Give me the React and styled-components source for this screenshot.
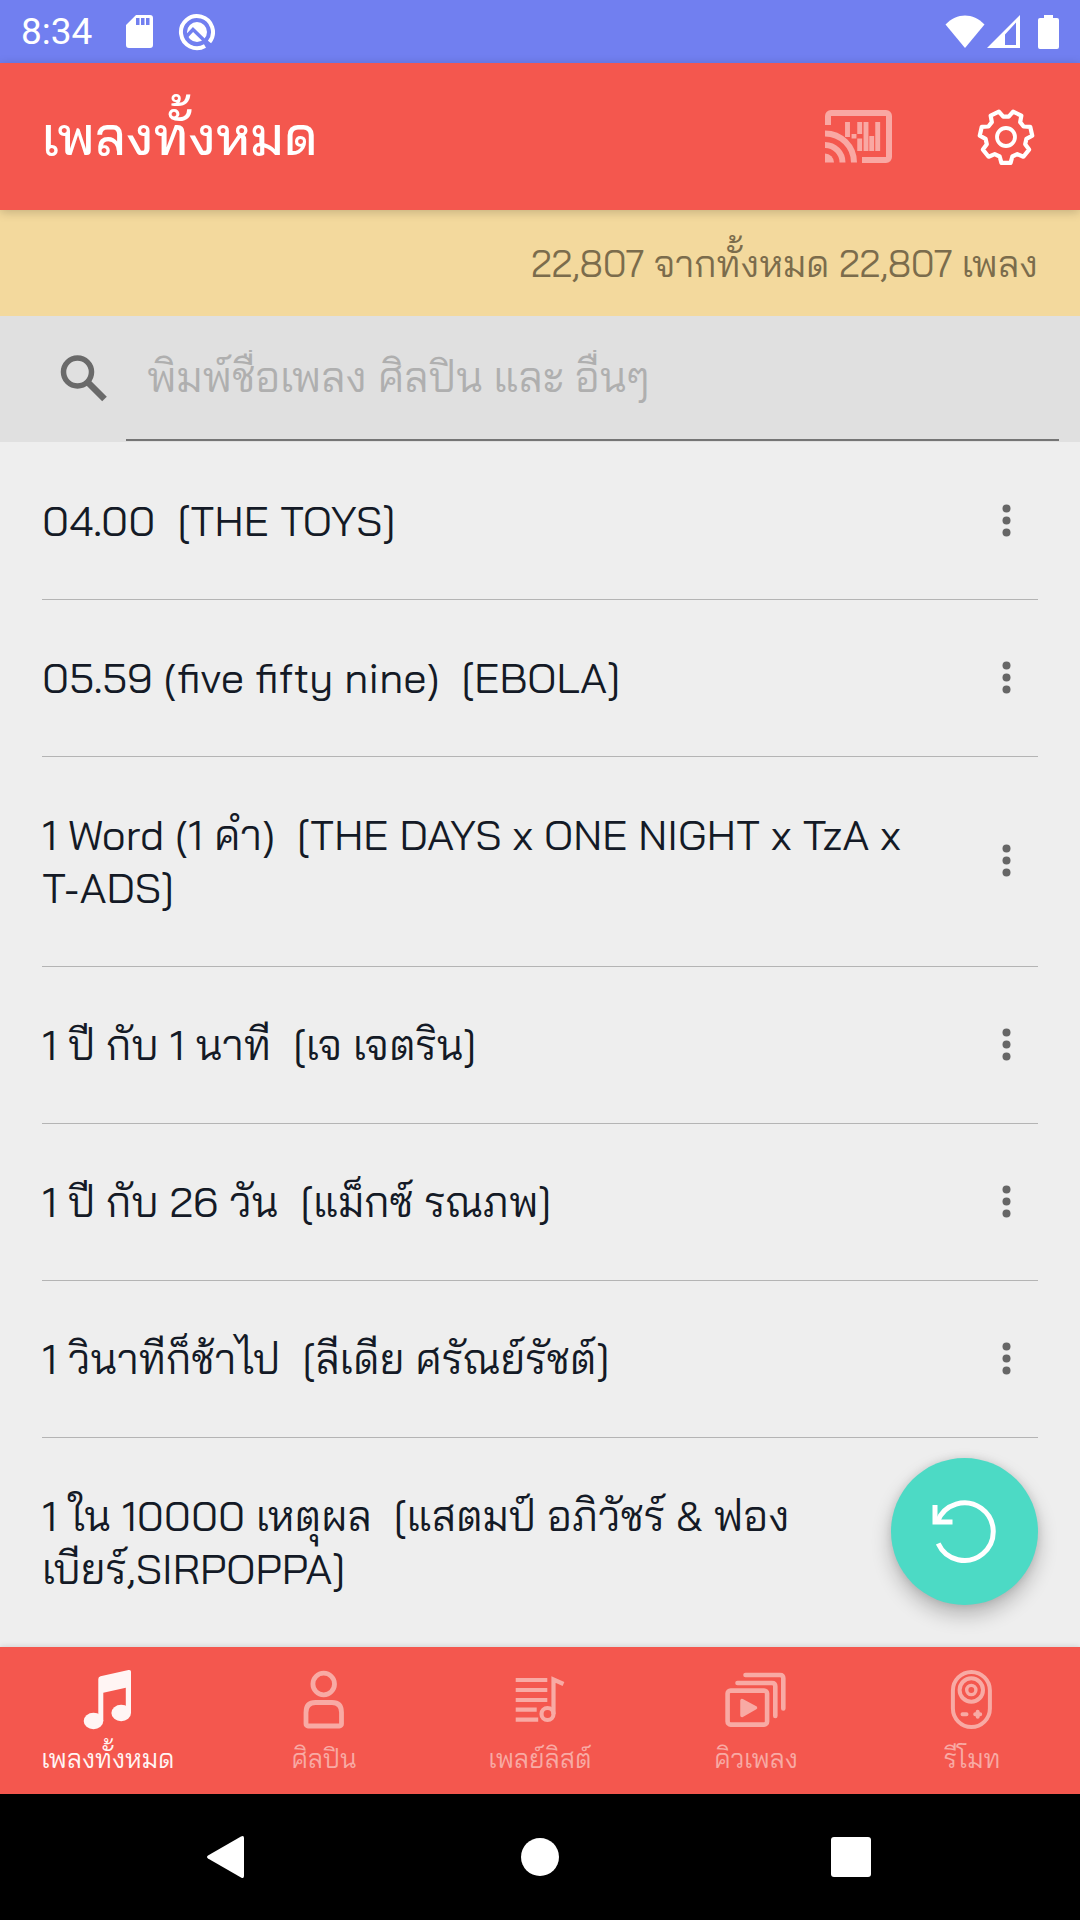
import React, { useState } from 'react';
import styled, { createGlobalStyle } from 'styled-components';

const GlobalStyle = createGlobalStyle`
  * {
    box-sizing: border-box;
  }

  body {
    margin: 0;
    background: #eeeeee;
    font-family: 'Bai Jamjuree', 'Noto Sans Thai', 'Noto Sans', sans-serif;
  }

  button, input {
    font-family: inherit;
  }
`;

const Screen = styled.div`
  display: flex;
  flex-direction: column;
  height: 100vh;
`;

const StatusBar = styled.div`
  flex: none;
  display: flex;
  align-items: center;
  justify-content: space-between;
  height: 63px;
  padding: 0 21px;
  background: #717ff0;
  color: white;
`;

const StatusGroup = styled.div`
  display: flex;
  align-items: center;
  gap: ${({ $gap }) => $gap};
`;

const Clock = styled.time`
  font-family: Roboto, sans-serif;
  font-size: 37px;
  line-height: 44px;
  margin-right: 10px;
`;

const Header = styled.header`
  flex: none;
  position: relative;
  display: flex;
  align-items: center;
  height: 147px;
  padding: 0 32px 0 42px;
  background: #f4574e;
  color: white;
  box-shadow: 0 2px 10px rgba(0, 0, 0, 0.2);
`;

const Title = styled.h1`
  flex: 1;
  margin: 0;
  padding-bottom: 4px;
  font-size: 53px;
  line-height: 66px;
  font-weight: 500;
`;

const IconButton = styled.button`
  display: flex;
  align-items: center;
  justify-content: center;
  flex: none;
  width: ${({ $width }) => $width || '64px'};
  height: 84px;
  padding: 0;
  border: none;
  background: none;
  color: inherit;
  cursor: pointer;
`;

const HeaderActions = styled.div`
  display: flex;
  gap: 63px;
`;

const CountBar = styled.p`
  flex: none;
  margin: 0;
  padding: 30px 42px;
  background: #f3d99d;
  color: #7b6c4c;
  font-size: 37px;
  line-height: 46px;
  text-align: right;
`;

const SearchBar = styled.form`
  flex: none;
  display: flex;
  height: 126px;
  padding: 0 21px 1px 42px;
  background: #e0e0e0;
`;

const SearchLabel = styled.label`
  display: flex;
  align-items: center;
  width: 84px;
  padding-bottom: 2px;
  color: #6a6a6a;
`;

const SearchInput = styled.input`
  flex: 1;
  min-width: 0;
  padding: 0 21px 2px;
  border: none;
  border-bottom: 2px solid #757575;
  background: none;
  color: #141a26;
  font-size: 42px;
  outline: none;

  &::placeholder {
    color: #afafaf;
    opacity: 1;
  }
`;

const SongArea = styled.main`
  position: relative;
  flex: 1;
  min-height: 0;
`;

const SongList = styled.ul`
  height: 100%;
  margin: 0;
  padding: 0 42px;
  overflow-y: auto;
  list-style: none;
  scrollbar-width: none;
`;

const SongRow = styled.li`
  display: flex;
  align-items: center;
  gap: 42px;
  padding: 52px 0;
  color: #141a26;

  & + & {
    padding-top: 51px;
    border-top: 1px solid #b4b4b4;
  }
`;

const SongTitle = styled.span`
  flex: 1;
  font-size: 42px;
  line-height: 53px;
  white-space: pre-wrap;
`;

const MoreButton = styled(IconButton)`
  height: 53px;
  color: #666666;
`;

const Fab = styled.button`
  position: absolute;
  right: 42px;
  bottom: 42px;
  display: flex;
  align-items: center;
  justify-content: center;
  width: 147px;
  height: 147px;
  padding: 0;
  border: none;
  border-radius: 50%;
  background: #4cdac5;
  color: white;
  box-shadow: 0 10px 20px rgba(0, 0, 0, 0.24), 0 0 8px rgba(0, 0, 0, 0.1);
  cursor: pointer;
`;

const TabBar = styled.nav`
  flex: none;
  position: relative;
  display: flex;
  height: 147px;
  background: #f4574e;
  box-shadow: 0 0 6px rgba(0, 0, 0, 0.15);
`;

const Tab = styled.button`
  flex: 1;
  display: flex;
  flex-direction: column;
  align-items: center;
  gap: 12px;
  padding: 20px 0 0;
  border: none;
  background: none;
  color: ${({ $active }) => ($active ? '#fff5f4' : '#f8aaa4')};
  font-size: 26px;
  line-height: 32px;
  cursor: pointer;
`;

const SystemBar = styled.div`
  flex: none;
  display: flex;
  align-items: center;
  justify-content: center;
  gap: 228px;
  height: 126px;
  background: black;
  color: white;
`;

const songs = [
  '04.00  [THE TOYS]',
  '05.59 (five fifty nine)  [EBOLA]',
  '1 Word (1 คำ)  [THE DAYS x ONE NIGHT x TzA x T-ADS]',
  '1 ปี กับ 1 นาที  [เจ เจตริน]',
  '1 ปี กับ 26 วัน  [แม็กซ์ รณภพ]',
  '1 วินาทีก็ช้าไป  [ลีเดีย ศรัณย์รัชต์]',
  '1 ใน 10000 เหตุผล  [แสตมป์ อภิวัชร์ & ฟองเบียร์,SIRPOPPA]',
];

// one tooth = two points on the inner circle and two on the outer one
const gearPoints = Array.from({ length: 7 }, (_, i) =>
  [[20.5, -18], [26.3, -10], [26.3, 10], [20.5, 18]].map(([r, offset]) => {
    const angle = ((i * 360) / 7 + 90 + offset) * (Math.PI / 180);
    return `${(30 + r * Math.cos(angle)).toFixed(2)},${(30 + r * Math.sin(angle)).toFixed(2)}`;
  }).join(' ')
).join(' ');

const SdCardIcon = () => (
  <svg width="28" height="34" viewBox="0 0 28 34" fill="currentColor">
    <path
      fillRule="evenodd"
      d="M10 0h14a3 3 0 0 1 3 3v27a3 3 0 0 1-3 3H3a3 3 0 0 1-3-3V10zM10 3v7h3.5V3zM15 3v7h3.5V3zM20 3v7h3.5V3z"
    />
  </svg>
);

const SyncBadgeIcon = () => (
  <svg width="38" height="38" viewBox="0 0 38 38" fill="none" stroke="currentColor">
    <path d="M31.500 29A16 16 0 1 0 27 32.900" strokeWidth="4" />
    <circle cx="19" cy="19" r="10" fill="currentColor" stroke="none" />
    <path d="M8 24l7-7.500L33 34" stroke="#717ff0" strokeWidth="3.400" />
  </svg>
);

const WifiIcon = () => (
  <svg width="40" height="34" viewBox="0 0 40 34" fill="currentColor">
    <path d="M20 33L.5 9.500C12 -2.500 28 -2.500 39.500 9.500z" />
  </svg>
);

const SignalIcon = () => (
  <svg width="33" height="34" viewBox="0 0 33 34" fill="currentColor">
    <path fillRule="evenodd" d="M0 33L33 0v33zM18 19.500V30h11V7.500z" />
  </svg>
);

const BatteryIcon = () => (
  <svg width="21" height="34" viewBox="0 0 21 34" fill="currentColor">
    <path d="M6 0h9v3h4a2 2 0 0 1 2 2v27a2 2 0 0 1-2 2H2a2 2 0 0 1-2-2V5a2 2 0 0 1 2-2h4z" />
  </svg>
);

const CastIcon = () => (
  <svg width="68" height="54" viewBox="0 0 68 54" fill="none" stroke="#f9a8a3" strokeWidth="6">
    <path d="M3 15V6a3 3 0 0 1 3-3h55a3 3 0 0 1 3 3v41a3 3 0 0 1-3 3H37" />
    <path d="M0 23.500a29 29 0 0 1 29 29M0 35a17.500 17.500 0 0 1 17.500 17.500" />
    <path d="M0 43.500a9 9 0 0 1 9 9H0z" fill="#f9a8a3" stroke="none" />
    <path
      d="M22.500 12v15M29 24v4.500M34.700 12v12M34.700 28.500V41M41 12v29M46.700 26v15M52.700 12v29"
      strokeWidth="4.900"
    />
  </svg>
);

const GearIcon = () => (
  <svg width="60" height="60" viewBox="0 0 60 60" fill="none" stroke="currentColor" strokeLinejoin="round">
    <polygon points={gearPoints} strokeWidth="4.200" />
    <circle cx="30" cy="30" r="9" strokeWidth="3.800" />
  </svg>
);

const SearchIcon = () => (
  <svg width="84" height="60" viewBox="0 0 84 60" fill="none" stroke="currentColor">
    <circle cx="35.500" cy="24" r="14" strokeWidth="5.500" />
    <path d="M45.500 34l17 17" strokeWidth="6.500" />
  </svg>
);

const MoreIcon = () => (
  <svg width="12" height="36" viewBox="0 0 12 36" fill="currentColor">
    <circle cx="6.500" cy="5.500" r="4" />
    <circle cx="6.500" cy="17.500" r="4" />
    <circle cx="6.500" cy="29.500" r="4" />
  </svg>
);

const RestartIcon = () => (
  <svg width="72" height="72" viewBox="0 0 72 72" fill="none" stroke="currentColor" strokeWidth="5">
    <path d="M9.200 47.500A28.800 28.800 0 1 0 8.500 25.500" />
    <path d="M6 9v17h17.500" />
  </svg>
);

const MusicIcon = () => (
  <svg width="64" height="64" viewBox="0 0 64 64" fill="currentColor">
    <path d="M24.500 9.300L52.500 3a2 2 0 0 1 2.500 2v41h-5.200V20.700L27.300 25.700V54h-5V12q0-2.200 2.200-2.700z" />
    <ellipse cx="17.500" cy="54" rx="9.800" ry="8.200" />
    <ellipse cx="45.200" cy="46" rx="9.800" ry="8.200" />
  </svg>
);

const ArtistIcon = () => (
  <svg width="64" height="64" viewBox="0 0 64 64" fill="none" stroke="currentColor" strokeWidth="4.800">
    <circle cx="31.700" cy="17" r="10.800" />
    <path d="M23.500 35.500h16.500q9.500 0 9.500 10V57a2 2 0 0 1-2 2h-31.500a2 2 0 0 1-2-2V45.500q0-10 9.500-10z" />
  </svg>
);

const PlaylistIcon = () => (
  <svg width="64" height="64" viewBox="0 0 64 64" fill="none" stroke="currentColor" strokeWidth="4.200">
    <path d="M7.700 13h31.600M7.700 23h31.600M7.700 33h31.600M7.700 42.700h21M7.700 52.700h22.500" />
    <circle cx="39.500" cy="47" r="6" />
    <path d="M45.500 47V12.500l10 4.500" />
  </svg>
);

const QueueIcon = () => (
  <svg width="64" height="64" viewBox="0 0 64 64" fill="none" stroke="currentColor" strokeWidth="4.600" strokeLinecap="round" strokeLinejoin="round">
    <rect x="3.600" y="23.600" width="39.500" height="34" rx="3" />
    <path d="M18 33.500v15l13.500-7.700z" fill="currentColor" strokeWidth="3.500" />
    <path d="M13.500 16H48q3.300 0 3.300 3.300V49" />
    <path d="M21.500 8H56q3.300 0 3.300 3.300V41.500" />
  </svg>
);

const RemoteIcon = () => (
  <svg width="64" height="64" viewBox="0 0 64 64" fill="none" stroke="currentColor" strokeWidth="4">
    <rect x="12.900" y="5" width="37" height="55" rx="18.500" />
    <circle cx="31.300" cy="23" r="11.700" />
    <circle cx="31.300" cy="23" r="4.600" strokeWidth="3.400" />
    <path d="M22.500 47.300h4M35.200 47.300h5M37.700 44.800v5" strokeLinecap="round" />
  </svg>
);

const tabs = [
  { id: 'all', label: 'เพลงทั้งหมด', Icon: MusicIcon },
  { id: 'artists', label: 'ศิลปิน', Icon: ArtistIcon },
  { id: 'playlists', label: 'เพลย์ลิสต์', Icon: PlaylistIcon },
  { id: 'queue', label: 'คิวเพลง', Icon: QueueIcon },
  { id: 'remote', label: 'รีโมท', Icon: RemoteIcon },
];

const App = () => {
  const [activeTab, setActiveTab] = useState('all');
  const [query, setQuery] = useState('');

  return (
    <Screen>
      <GlobalStyle />
      <StatusBar>
        <StatusGroup $gap="24px">
          <Clock>8:34</Clock>
          <SdCardIcon />
          <SyncBadgeIcon />
        </StatusGroup>
        <StatusGroup $gap="18px">
          <StatusGroup $gap="2px">
            <WifiIcon />
            <SignalIcon />
          </StatusGroup>
          <BatteryIcon />
        </StatusGroup>
      </StatusBar>

      <Header>
        <Title>เพลงทั้งหมด</Title>
        <HeaderActions>
          <IconButton $width="84px" type="button" aria-label="Cast">
            <CastIcon />
          </IconButton>
          <IconButton $width="84px" type="button" aria-label="Settings">
            <GearIcon />
          </IconButton>
        </HeaderActions>
      </Header>

      <CountBar>22,807 จากทั้งหมด 22,807 เพลง</CountBar>

      <SearchBar onSubmit={(e) => e.preventDefault()}>
        <SearchLabel htmlFor="song-search" aria-label="Search">
          <SearchIcon />
        </SearchLabel>
        <SearchInput
          id="song-search"
          type="text"
          value={query}
          onChange={(e) => setQuery(e.target.value)}
          placeholder="พิมพ์ชื่อเพลง ศิลปิน และ อื่นๆ"
        />
      </SearchBar>

      <SongArea>
        <SongList>
          {songs.filter((song) => song.includes(query)).map((song) => (
            <SongRow key={song}>
              <SongTitle>{song}</SongTitle>
              <MoreButton type="button" aria-label="More">
                <MoreIcon />
              </MoreButton>
            </SongRow>
          ))}
        </SongList>
        <Fab type="button" aria-label="Restart">
          <RestartIcon />
        </Fab>
      </SongArea>

      <TabBar>
        {tabs.map(({ id, label, Icon }) => (
          <Tab key={id} type="button" $active={activeTab === id} onClick={() => setActiveTab(id)}>
            <Icon />
            {label}
          </Tab>
        ))}
      </TabBar>

      <SystemBar>
        <IconButton $width="84px" type="button" aria-label="Back">
          <svg width="84" height="44" viewBox="0 0 84 44" fill="currentColor">
            <path d="M22 20.500L55 1.500q3-1.500 3 1.500v38q0 3-3 1.500L22 23.500q-2-1.500 0-3z" />
          </svg>
        </IconButton>
        <IconButton $width="84px" type="button" aria-label="Home">
          <svg width="84" height="44" viewBox="0 0 84 44" fill="currentColor">
            <circle cx="42" cy="22" r="19" />
          </svg>
        </IconButton>
        <IconButton $width="84px" type="button" aria-label="Recents">
          <svg width="84" height="44" viewBox="0 0 84 44" fill="currentColor">
            <rect x="21" y="2" width="40" height="40" rx="3" />
          </svg>
        </IconButton>
      </SystemBar>
    </Screen>
  );
};

export default App;
